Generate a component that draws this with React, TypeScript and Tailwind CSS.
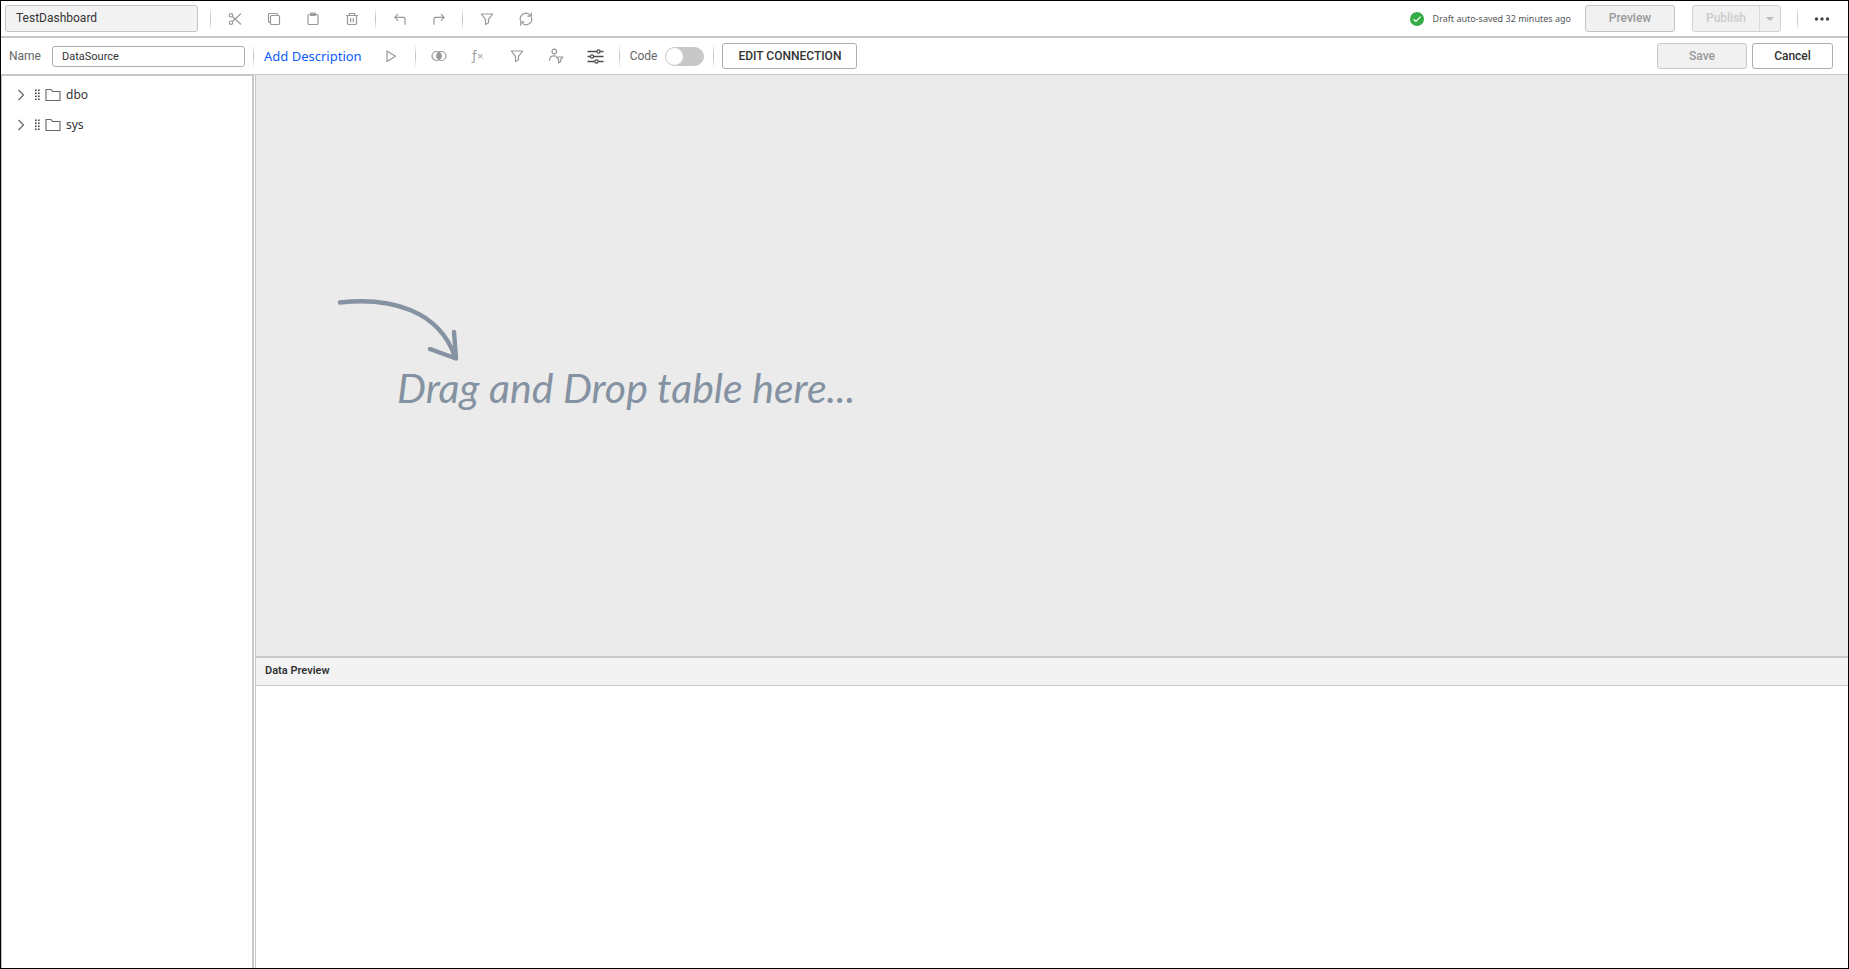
import React, { useState } from "react";

type IconProps = { children: React.ReactNode };

function Icon({ children }: IconProps) {
  return (
    <svg
      aria-hidden="true"
      width="16"
      height="16"
      viewBox="0 0 16 16"
      fill="none"
      stroke="currentColor"
      strokeWidth="1.2"
      strokeLinecap="round"
      strokeLinejoin="round"
      className="block shrink-0"
    >
      {children}
    </svg>
  );
}

const icons = {
  cut: (
    <Icon>
      <circle cx="4" cy="4.3" r="1.7" />
      <circle cx="4" cy="11.7" r="1.7" />
      <path d="M5.4 5.5 13.5 13M5.4 10.5 13.5 3" />
    </Icon>
  ),
  copy: (
    <Icon>
      <rect x="4.5" y="4.5" width="9" height="9" rx="1" />
      <path d="M4.5 11.5H3.5a1 1 0 0 1-1-1v-7a1 1 0 0 1 1-1h7a1 1 0 0 1 1 1v1" />
    </Icon>
  ),
  paste: (
    <Icon>
      <rect x="3" y="3.5" width="10" height="10" rx="1" />
      <path d="M5.7 2.2h4.6v2.3H5.7z" />
    </Icon>
  ),
  trash: (
    <Icon>
      <path d="M2.5 4.5h11M5.5 4.5V2.5h5v2M3.5 4.5v8c0 .6.4 1 1 1h7c.6 0 1-.4 1-1v-8M6.7 7.5v3.5M9.3 7.5v3.5" />
    </Icon>
  ),
  undo: (
    <Icon>
      <path d="M5.7 3.3 2.8 6.3l2.9 3M2.8 6.3h8.7c.8 0 1.5.7 1.5 1.5v5.4" />
    </Icon>
  ),
  redo: (
    <Icon>
      <path d="m10.3 3.3 2.9 3-2.9 3M13.2 6.3H4.5C3.7 6.3 3 7 3 7.8v5.4" />
    </Icon>
  ),
  filter: (
    <Icon>
      <path d="M2.3 3h11.4L9.5 8.3v3.5l-3 1.7V8.3z" />
    </Icon>
  ),
  refresh: (
    <Icon>
      <path d="M2.5 9.5a5.6 5.6 0 0 1 9.8-5M13.5 6.5a5.6 5.6 0 0 1-9.8 5M13.3 1.8v3.4H9.9M2.7 14.2v-3.4h3.4" />
    </Icon>
  ),
  play: (
    <Icon>
      <path d="M4 3v10.5l8.5-5.2z" />
    </Icon>
  ),
  join: (
    <Icon>
      <circle cx="5.5" cy="8" r="4.5" />
      <circle cx="10.5" cy="8" r="4.5" />
      <path d="M8 4.2a4.5 4.5 0 0 1 0 7.6 4.5 4.5 0 0 1 0-7.6z" fill="currentColor" />
    </Icon>
  ),
  userFilter: (
    <Icon>
      <circle cx="6.3" cy="3.5" r="2.3" />
      <path d="M1.5 12.5c0-3 1.7-4.7 4.3-4.7.7 0 1.3.1 1.7.3M8.5 9h6.3l-2.1 2.5v2.3l-2.1 1.2v-3.5z" />
    </Icon>
  ),
};

function IconButton({ label, children }: { label: string; children: React.ReactNode }) {
  return (
    <button
      type="button"
      aria-label={label}
      className="flex h-6 w-[39px] shrink-0 items-center justify-center text-[#999999]"
    >
      {children}
    </button>
  );
}

function Divider() {
  return (
    <span
      aria-hidden="true"
      className="mx-1 h-6 w-px shrink-0 bg-linear-to-b from-transparent via-[#bdbdbd] to-transparent"
    />
  );
}

function TreeNode({ name }: { name: string }) {
  return (
    <li>
      <button type="button" className="flex h-[30px] w-full items-center pl-[15px] text-left">
        <svg aria-hidden="true" width="8" height="12" viewBox="0 0 8 12" fill="none" stroke="#666" strokeWidth="1.2">
          <path d="M1.5 1 6.5 6l-5 5" />
        </svg>
        <svg aria-hidden="true" width="6" height="12" viewBox="0 0 6 12" fill="#444" className="ml-[9px]">
          {[0, 3, 6, 9].map((y) => (
            <React.Fragment key={y}>
              <rect x="1" y={y + 0.5} width="1.6" height="1.6" />
              <rect x="4" y={y + 0.5} width="1.6" height="1.6" />
            </React.Fragment>
          ))}
        </svg>
        <svg
          aria-hidden="true"
          width="16"
          height="14"
          viewBox="0 0 16 14"
          fill="none"
          stroke="#666"
          strokeWidth="1.1"
          className="ml-[5px]"
        >
          <path d="M1 12.5v-11h5l1.5 2H15v9z" />
        </svg>
        <span className="ml-[5px] font-['Noto_Sans',sans-serif] text-xs leading-5 text-[#333333]">{name}</span>
      </button>
    </li>
  );
}

export default function App() {
  const [dashboard, setDashboard] = useState("TestDashboard");
  const [source, setSource] = useState("DataSource");
  const [codeMode, setCodeMode] = useState(false);

  return (
    <div className="flex h-screen flex-col border border-black bg-white font-[Roboto,sans-serif] text-xs text-[#333333]">
      <header className="flex h-[37px] shrink-0 items-center border-b-2 border-[#c8c8c8] pl-1">
        <input
          aria-label="Dashboard name"
          value={dashboard}
          onChange={(e) => setDashboard(e.target.value)}
          className="mr-2 h-[27px] w-[193px] rounded-[3px] border border-[#c4c4c4] bg-[#f3f3f3] px-[10px] pb-[2px] text-xs"
        />
        <Divider />
        <IconButton label="Cut">{icons.cut}</IconButton>
        <IconButton label="Copy">{icons.copy}</IconButton>
        <IconButton label="Paste">{icons.paste}</IconButton>
        <IconButton label="Delete">{icons.trash}</IconButton>
        <Divider />
        <IconButton label="Undo">{icons.undo}</IconButton>
        <IconButton label="Redo">{icons.redo}</IconButton>
        <Divider />
        <IconButton label="Filter">{icons.filter}</IconButton>
        <IconButton label="Refresh">{icons.refresh}</IconButton>

        <div className="ml-auto flex items-center pr-[7px]">
          <svg aria-hidden="true" width="14" height="14" viewBox="0 0 14 14" className="shrink-0">
            <circle cx="7" cy="7" r="7" fill="#35ac46" />
            <path d="m3.5 7.2 2.4 2.3 4.7-4.9" fill="none" stroke="#fff" strokeWidth="1.2" />
          </svg>
          <span className="mr-[14px] ml-[9px] whitespace-nowrap font-['Noto_Sans',sans-serif] text-[9px] leading-4 text-[#555555]">
            Draft auto-saved 32 minutes ago
          </span>
          <button
            type="button"
            className="h-[27px] w-[90px] rounded-[3px] border border-[#c4c4c4] bg-[#f1f1f1] pb-[2px] font-medium text-[#999999]"
          >
            Preview
          </button>
          <div className="mr-3 ml-[17px] flex h-[27px] rounded-[3px] border border-[#d2d2d2] bg-[#f1f1f1] text-[#cbcbcb]">
            <button type="button" className="w-[67px] border-r border-[#d9d9d9] pb-[2px] font-medium">
              Publish
            </button>
            <button type="button" aria-label="Publish options" className="flex w-5 items-center justify-center">
              <svg aria-hidden="true" width="8" height="4" viewBox="0 0 8 4" fill="#bdbdbd">
                <path d="M0 0h8L4 4z" />
              </svg>
            </button>
          </div>
          <Divider />
          <button
            type="button"
            aria-label="More options"
            className="flex h-6 w-[39px] items-center justify-center text-[#444444]"
          >
            <svg aria-hidden="true" width="16" height="4" viewBox="0 0 16 4" fill="currentColor">
              <circle cx="2.5" cy="2" r="1.7" />
              <circle cx="8" cy="2" r="1.7" />
              <circle cx="13.5" cy="2" r="1.7" />
            </svg>
          </button>
        </div>
      </header>

      <div className="flex h-9 shrink-0 items-center pl-2">
        <label htmlFor="source-name" className="w-[43px] text-[#666666]">
          Name
        </label>
        <input
          id="source-name"
          value={source}
          onChange={(e) => setSource(e.target.value)}
          className="mr-1 h-[21px] w-[193px] rounded-[3px] border border-[#adadad] bg-white px-[9px] text-[11px]"
        />
        <Divider />
        <button
          type="button"
          className="mr-[10px] ml-[6px] whitespace-nowrap font-['Noto_Sans',sans-serif] text-[13px] leading-5 text-[#0b5cff]"
        >
          Add Description
        </button>
        <IconButton label="Run">{icons.play}</IconButton>
        <Divider />
        <IconButton label="Join">{icons.join}</IconButton>
        <IconButton label="Expression">
          <span aria-hidden="true" className="flex font-['DejaVu_Sans',sans-serif] leading-4">
            <span className="text-xs">ƒ</span>
            <span className="text-[9px]">×</span>
          </span>
        </IconButton>
        <IconButton label="Query filter">{icons.filter}</IconButton>
        <IconButton label="User filter">{icons.userFilter}</IconButton>
        <IconButton label="Parameters">
          <svg
            aria-hidden="true"
            width="17"
            height="16"
            viewBox="0 0 17 16"
            fill="none"
            stroke="#4d4d4d"
            strokeWidth="1.3"
          >
            <path d="M.5 3.5h9.2M13.3 3.5h3.2M.5 8.5h2.7M6.8 8.5h9.7M.5 13.5h7.2M11.3 13.5h5.2" />
            <circle cx="11.5" cy="3.5" r="1.6" />
            <circle cx="5" cy="8.5" r="1.6" />
            <circle cx="9.5" cy="13.5" r="1.6" />
          </svg>
        </IconButton>
        <Divider />
        <label className="ml-[6px] flex items-center gap-2 text-[#666666]">
          Code
          <input
            type="checkbox"
            role="switch"
            checked={codeMode}
            onChange={(e) => setCodeMode(e.target.checked)}
            className="peer sr-only"
          />
          <span className="mr-[5px] flex h-[19px] w-[39px] rounded-full border border-[#c8c8c8] bg-[#c8c8c8] peer-checked:justify-end peer-checked:bg-[#1464f6]">
            <span className="size-[17px] rounded-full bg-white" />
          </span>
        </label>
        <Divider />
        <button
          type="button"
          className="ml-1 h-[26px] w-[135px] rounded-[3px] border border-[#adadad] bg-white text-xs font-medium whitespace-nowrap"
        >
          EDIT CONNECTION
        </button>
        <div className="ml-auto flex gap-[5px] pr-[15px]">
          <button
            type="button"
            className="h-[26px] w-[90px] rounded-[3px] border border-[#c8c8c8] bg-[#f1f1f1] font-medium text-[#999999]"
          >
            Save
          </button>
          <button type="button" className="h-[26px] w-[81px] rounded-[3px] border border-[#adadad] bg-white font-medium">
            Cancel
          </button>
        </div>
      </div>

      <div className="flex min-h-0 flex-1 border-t border-[#c8c8c8]">
        <nav
          aria-label="Tables"
          className="w-[253px] shrink-0 border-t border-r-2 border-l border-[#c8c8c8] pt-1"
        >
          <ul>
            <TreeNode name="dbo" />
            <TreeNode name="sys" />
          </ul>
        </nav>
        <main className="ml-px flex min-w-0 flex-1 flex-col border-l border-[#c8c8c8]">
          <section aria-label="Design canvas" className="min-h-0 flex-1 bg-[#ebebeb] pt-[222px] pl-20">
            <svg
              aria-hidden="true"
              width="124"
              height="67"
              viewBox="0 0 124 67"
              fill="none"
              stroke="#8492a1"
              strokeWidth="4.4"
              strokeLinecap="round"
              strokeLinejoin="round"
            >
              <path d="M4 5.5C54 0 103 13 119 60M118 35l2 26.5L94 52" />
            </svg>
            <p className="ml-[61px] whitespace-nowrap font-[Lato,sans-serif] text-[41px] leading-[48px] text-[#8492a1] italic">
              Drag and Drop table here...
            </p>
          </section>
          <section aria-labelledby="preview-title" className="h-[312px] shrink-0 border-t-2 border-[#c8c8c8] bg-white">
            <h2
              id="preview-title"
              className="flex h-7 items-center border-b border-[#c8c8c8] bg-[#f3f3f3] px-[9px] text-[11px] font-semibold"
            >
              Data Preview
            </h2>
          </section>
        </main>
      </div>
    </div>
  );
}
